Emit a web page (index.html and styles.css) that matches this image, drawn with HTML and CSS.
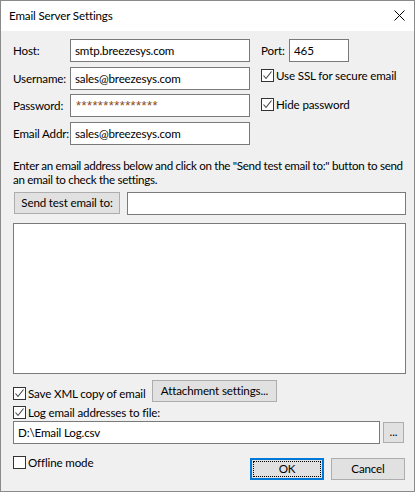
FILE: index.html
```html
<!DOCTYPE html>
<html lang="en">
<head>
  <meta charset="UTF-8" />
  <title>Email Server Settings</title>
  <link rel="stylesheet" href="styles.css">
</head>
<body>
  <div class="window">
    <div class="titlebar">
      <span class="title">Email Server Settings</span>
      <svg class="close" width="11" height="11" viewBox="0 0 11 11">
        <path d="M0.5 0.5L10.5 10.5M10.5 0.5L0.5 10.5" stroke="#000" stroke-width="1" fill="none"/>
      </svg>
    </div>

    <div class="content">
      <div class="top">
        <div class="fields">
          <label>Host:</label><input type="text" value="smtp.breezesys.com" />
          <label>Username:</label><input type="text" value="sales@breezesys.com" />
          <label>Password:</label><input type="text" class="masked" value="***************" />
          <label>Email Addr:</label><input type="text" value="sales@breezesys.com" />
        </div>
        <div class="side">
          <div class="port">
            <label>Port:</label><input type="text" class="port-input" value="465" />
          </div>
          <div class="check ssl"><span class="box checked"></span>Use SSL for secure email</div>
          <div class="check hide"><span class="box checked"></span>Hide password</div>
        </div>
      </div>

      <p class="hint">Enter an email address below and click on the "Send test email to:" button to send an email to check the settings.</p>

      <div class="send-row">
        <button class="send">Send test email to:</button>
        <input type="text" class="grow" value="" />
      </div>

      <div class="log"></div>

      <div class="opt-row">
        <div class="check xml"><span class="box checked"></span>Save XML copy of email</div>
        <button class="attach">Attachment settings...</button>
      </div>
      <div class="check logfile"><span class="box checked"></span>Log email addresses to file:</div>

      <div class="path-row">
        <input type="text" class="grow" value="D:\Email Log.csv" />
        <button class="browse">...</button>
      </div>

      <div class="footer">
        <div class="check offline"><span class="box"></span>Offline mode</div>
        <div class="buttons">
          <button class="ok"><span>OK</span></button>
          <button class="cancel">Cancel</button>
        </div>
      </div>
    </div>
  </div>
</body>
</html>
```

FILE: styles.css
```css
body {
  margin: 0;
  font-family: "Segoe UI", Lato, "Liberation Sans", sans-serif;
  font-size: 11.6px;
  letter-spacing: -0.15px;
  color: #000;
}
.window {
  width: 413px;
  height: 490px;
  border: 1px solid #8a8a8a;
  background: #f0f0f0;
  display: flex;
  flex-direction: column;
}
.titlebar {
  height: 30px;
  background: #fff;
  display: flex;
  align-items: center;
  justify-content: space-between;
  padding: 0 9px 0 8px;
}
.title {
  margin-top: -1px;
}
.close {
  display: block;
  margin-top: -1px;
}
.content {
  padding: 8px 8px 0 12px;
  display: flex;
  flex-direction: column;
}
label {
  white-space: nowrap;
}
input, button {
  font-family: inherit;
  font-size: inherit;
  letter-spacing: inherit;
  color: #000;
  margin: 0;
}
input[type="text"] {
  height: 23px;
  box-sizing: border-box;
  border: 1px solid #7a7a7a;
  background: #fff;
  padding: 0 4px;
  outline: none;
}
button {
  background: #e1e1e1;
  border: 1px solid #adadad;
  box-sizing: border-box;
  padding: 0;
  height: 22px;
}
.top {
  display: flex;
}
.fields {
  display: grid;
  grid-template-columns: 57px 180px;
  grid-auto-rows: 23px;
  row-gap: 4.67px;
  align-items: center;
}
input.masked {
  font-family: "Liberation Sans", sans-serif;
  font-size: 13px;
  letter-spacing: 0.4px;
  color: #8a4a1c;
  padding-left: 5px;
}
.side {
  margin-left: 11px;
  display: flex;
  flex-direction: column;
}
.port {
  display: flex;
  align-items: center;
}
.port label {
  width: 28px;
}
.port-input {
  width: 60px;
}
.check {
  display: flex;
  align-items: center;
  height: 13px;
  white-space: nowrap;
}
.box {
  width: 13px;
  height: 13px;
  box-sizing: border-box;
  border: 1px solid #333;
  background: #fff;
  margin-right: 2px;
  flex: none;
}
.box.checked {
  background: #fff url("data:image/svg+xml;utf8,<svg xmlns='http://www.w3.org/2000/svg' width='11' height='11' viewBox='0 0 11 11'><path d='M1.5 5.5L4 8.5L9.5 1.5' stroke='%23444' stroke-width='1.1' fill='none'/></svg>") no-repeat center;
}
.ssl {
  margin-top: 7px;
}
.hide {
  margin-top: 16px;
}
.hint {
  margin: 14px 0 0 0;
  line-height: 14px;
  letter-spacing: -0.3px;
}
.send-row {
  margin-top: 5px;
  display: flex;
  align-items: flex-start;
}
.send {
  width: 106px;
  margin-left: 1px;
}
.grow {
  flex: 1;
}
.send-row .grow {
  margin-left: 7px;
}
.log {
  margin-top: 8px;
  height: 151px;
  border: 1px solid #7a7a7a;
  background: #fff;
  box-sizing: border-box;
}
.opt-row {
  margin-top: 6px;
  display: flex;
  align-items: flex-start;
}
.xml {
  margin-top: 7px;
  width: 139px;
}
.attach {
  width: 125px;
}
.logfile {
  margin-top: 4px;
}
.path-row {
  margin-top: 2px;
  display: flex;
  align-items: flex-start;
}
.browse {
  width: 21px;
  height: 21px;
  margin: 1px 2px 0 3px;
  line-height: 14px;
}
.footer {
  margin-top: 12px;
  display: flex;
  justify-content: space-between;
  align-items: flex-start;
}
.buttons {
  display: flex;
  gap: 7px;
  margin-top: 2px;
  margin-right: 1px;
}
.ok, .cancel {
  width: 74px;
}
.ok {
  border: 2px solid #0078d7;
  padding: 1px;
}
.ok span {
  display: block;
  height: 100%;
  border: 1px dotted #000;
  box-sizing: border-box;
  line-height: 14px;
}
```
